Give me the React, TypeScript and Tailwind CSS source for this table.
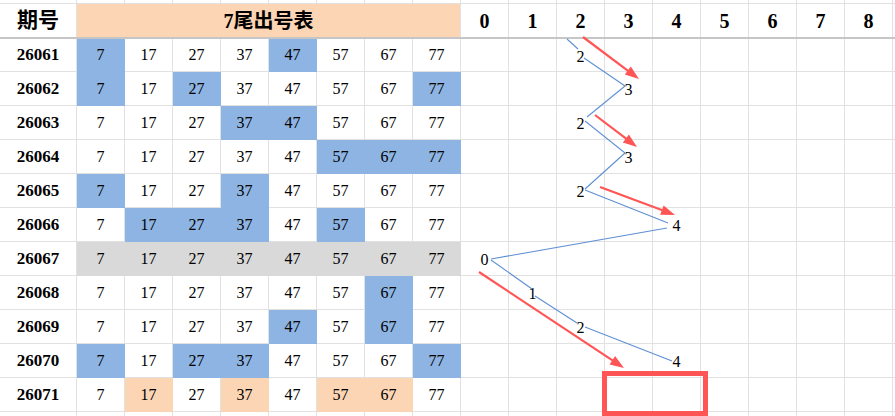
import React from "react";

const nums = [7, 17, 27, 37, 47, 57, 67, 77];
const digits = [0, 1, 2, 3, 4, 5, 6, 7, 8];

type Fill = "none" | "blue" | "gray" | "peach";

const fills: Record<Fill, string> = {
  none: "bg-white border-[#e1e1e1]",
  blue: "bg-[#8db4e2] border-[#8db4e2]",
  gray: "bg-[#d9d9d9] border-[#d9d9d9]",
  peach: "bg-[#fcd5b4] border-[#fcd5b4]",
};

const rows: { id: string; marks: number[]; fill: Fill; n: number | null }[] = [
  { id: "26061", marks: [0, 4], fill: "blue", n: 2 },
  { id: "26062", marks: [0, 2, 7], fill: "blue", n: 3 },
  { id: "26063", marks: [3, 4], fill: "blue", n: 2 },
  { id: "26064", marks: [5, 6, 7], fill: "blue", n: 3 },
  { id: "26065", marks: [0, 3], fill: "blue", n: 2 },
  { id: "26066", marks: [1, 2, 3, 5], fill: "blue", n: 4 },
  { id: "26067", marks: [0, 1, 2, 3, 4, 5, 6, 7], fill: "gray", n: 0 },
  { id: "26068", marks: [6], fill: "blue", n: 1 },
  { id: "26069", marks: [4, 6], fill: "blue", n: 2 },
  { id: "26070", marks: [0, 2, 3, 7], fill: "blue", n: 4 },
  { id: "26071", marks: [1, 3, 5, 6], fill: "peach", n: null },
];

// blue trend segments (gaps left around the digits)
const segs = [
  [567, 39, 578, 49],
  [584, 58, 625, 86],
  [625, 86, 587, 117],
  [585, 121, 625, 153],
  [625, 153, 585, 189],
  [585, 190, 668, 223],
  [667, 228, 491, 259],
  [491, 260, 532, 289],
  [535, 296, 577, 323],
  [585, 327, 672, 361],
];

const arrows = [
  [583, 37, 639, 79],
  [595, 115, 637, 147],
  [600, 187, 675, 215],
  [479, 272, 624, 368],
];

function Arrow({ a }: { a: number[] }) {
  const [x1, y1, x2, y2] = a;
  const len = Math.hypot(x2 - x1, y2 - y1);
  const ux = (x2 - x1) / len;
  const uy = (y2 - y1) / len;
  const hl = 14;
  const hw = 5;
  const bx = x2 - ux * hl;
  const by = y2 - uy * hl;
  const pts = `${x2},${y2} ${bx - uy * hw},${by + ux * hw} ${bx + uy * hw},${by - ux * hw}`;
  return (
    <g>
      <line x1={x1} y1={y1} x2={bx + ux * 2} y2={by + uy * 2} stroke="#ff5555" strokeWidth={2.2} />
      <polygon points={pts} fill="#ff5555" />
    </g>
  );
}

const serif = "font-['Liberation_Serif','Noto_Sans_CJK_SC',serif]";

function Strip({ h }: { h: string }) {
  return (
    <div className={`flex ${h}`}>
      <div className="w-[77px] shrink-0 border-r border-[#e1e1e1]" />
      {[...nums, ...digits].map((k, i) => (
        <div key={i} className="w-[48px] shrink-0 border-r border-[#e1e1e1]" />
      ))}
      <div className="flex-1" />
    </div>
  );
}

export default function App() {
  return (
    <div className={`relative w-[895px] h-[416px] overflow-hidden bg-white text-black ${serif}`}>
      <div className="border-b border-[#e1e1e1]">
        <Strip h="h-[3px]" />
      </div>

      {/* header */}
      <div className="flex h-[35px] border-b-2 border-[#c6c6c6]">
        <div className="w-[77px] shrink-0 border-r border-[#e1e1e1] flex items-center justify-center text-[21px] font-bold">
          期号
        </div>
        <div className="w-[384px] shrink-0 border-r border-[#e1e1e1] bg-[#fcd5b4] flex items-center justify-center text-[20px] font-bold">
          7尾出号表
        </div>
        {digits.map((d) => (
          <div
            key={d}
            className="w-[48px] shrink-0 border-r border-[#e1e1e1] flex items-center justify-center text-[20px] font-bold"
          >
            {d}
          </div>
        ))}
        <div className="flex-1" />
      </div>

      {rows.map((r, ri) => (
        <div key={r.id} className={`flex ${ri === 0 ? "h-[33px]" : "h-[34px]"}`}>
          <div className="w-[77px] shrink-0 border-r border-b border-[#e1e1e1] flex items-center justify-center text-[17px] font-bold">
            {r.id}
          </div>
          {nums.map((v, i) => (
            <div
              key={v}
              className={`w-[48px] shrink-0 border-r border-b flex items-center justify-center text-[16px] ${
                fills[r.marks.includes(i) ? r.fill : "none"]
              }`}
            >
              {v}
            </div>
          ))}
          {digits.map((d) => (
            <div
              key={d}
              className="w-[48px] shrink-0 border-r border-b border-[#e1e1e1] flex items-center justify-center pt-[3px] text-[16px]"
            >
              {r.n === d ? d : ""}
            </div>
          ))}
          <div className="flex-1 border-b border-[#e1e1e1]" />
        </div>
      ))}

      <Strip h="h-[5px]" />

      {/* drawn trend lines and markers */}
      <svg className="absolute inset-0 pointer-events-none" width={895} height={416}>
        {segs.map((s, i) => (
          <line key={i} x1={s[0]} y1={s[1]} x2={s[2]} y2={s[3]} stroke="#5f90d4" strokeWidth={1.1} />
        ))}
        {arrows.map((a, i) => (
          <Arrow key={i} a={a} />
        ))}
        <rect x={604.5} y={373.5} width={101} height={40} fill="none" stroke="#ff5555" strokeWidth={5} />
      </svg>
    </div>
  );
}
